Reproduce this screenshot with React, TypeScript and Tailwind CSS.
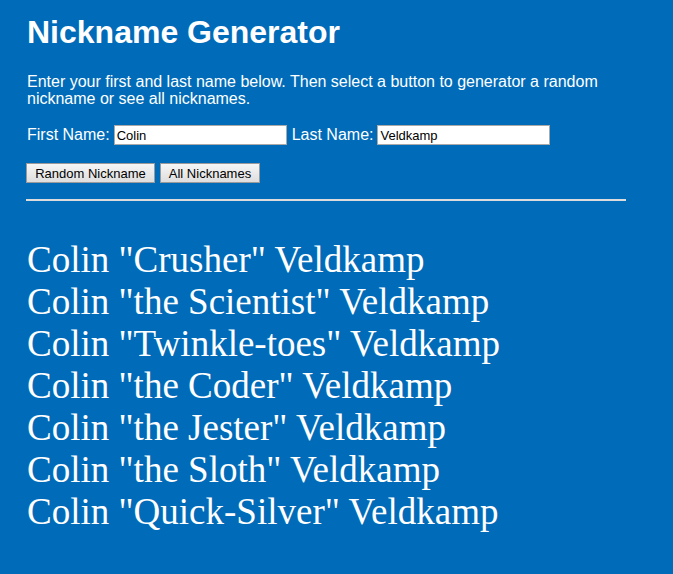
import { useState } from "react";

const nicknames = [
  "Crusher",
  "the Scientist",
  "Twinkle-toes",
  "the Coder",
  "the Jester",
  "the Sloth",
  "Quick-Silver",
];

export default function App() {
  const [first, setFirst] = useState("Colin");
  const [last, setLast] = useState("Veldkamp");

  return (
    <div className="min-h-[574px] bg-[#006cb9] text-white font-['Liberation_Sans',Arial,sans-serif]">
      <div className="w-[600px] ml-[26px] pt-[14px]">
        <h1 className="text-[32px] font-bold leading-[36px] pl-[1px]">Nickname Generator</h1>
        <p className="mt-[23px] text-[16px] leading-[17px] pl-[1px]">
          Enter your first and last name below. Then select a button to generator a random nickname or see all nicknames.
        </p>
        <div className="mt-[18px] flex items-center text-[16px] h-[20px] pl-[1px]">
          <label>First Name:</label>
          <input
            value={first}
            onChange={(e) => setFirst(e.target.value)}
            className="ml-[4px] w-[173px] h-[20px] bg-white border border-[#a9a9a9] px-[2px] text-[13px] text-black outline-none"
          />
          <label className="ml-[5px]">Last Name:</label>
          <input
            value={last}
            onChange={(e) => setLast(e.target.value)}
            className="ml-[4px] w-[173px] h-[20px] bg-white border border-[#a9a9a9] px-[2px] text-[13px] text-black outline-none"
          />
        </div>
        <div className="mt-[18px] flex gap-[5px]">
          <button className="h-[20px] w-[129px] border border-[#9a9a9a] bg-gradient-to-b from-[#f6f6f6] to-[#dedede] text-[13px] text-black leading-none">
            Random Nickname
          </button>
          <button className="h-[20px] w-[100px] border border-[#9a9a9a] bg-gradient-to-b from-[#f6f6f6] to-[#dedede] text-[13px] text-black leading-none">
            All Nicknames
          </button>
        </div>
        <hr className="mt-[16px] border-0 border-t-2 border-[#dcdcdc]" />
        <div className="mt-[38px] font-['Liberation_Serif','Times_New_Roman',serif] text-[37px] leading-[42px] pl-[1px]">
          {nicknames.map((n) => (
            <div key={n}>
              {first} "{n}" {last}
            </div>
          ))}
        </div>
      </div>
    </div>
  );
}
